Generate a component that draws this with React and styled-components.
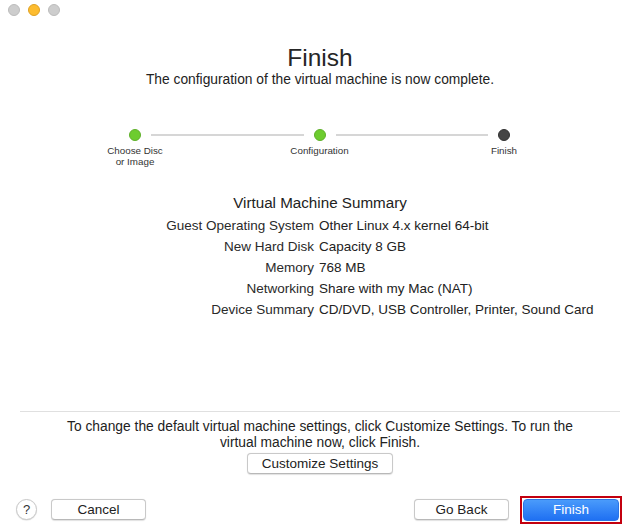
import React from "react";
import styled, { createGlobalStyle } from "styled-components";

const GlobalStyle = createGlobalStyle`
  html, body {
    margin: 0;
    padding: 0;
    background: #ffffff;
  }
  body {
    font-family: "Liberation Sans", Arial, sans-serif;
    color: #242424;
  }
`;

const steps = [
  { label: ["Choose Disc", "or Image"], done: true },
  { label: ["Configuration"], done: true },
  { label: ["Finish"], done: false },
];

const summary = [
  ["Guest Operating System", "Other Linux 4.x kernel 64-bit"],
  ["New Hard Disk", "Capacity 8 GB"],
  ["Memory", "768 MB"],
  ["Networking", "Share with my Mac (NAT)"],
  ["Device Summary", "CD/DVD, USB Controller, Printer, Sound Card"],
];

function App() {
  return (
    <>
      <GlobalStyle />
      <Window>
        <TitleBar>
          <Light />
          <Light $active />
          <Light />
        </TitleBar>

        <Title>Finish</Title>
        <Subtitle>The configuration of the virtual machine is now complete.</Subtitle>

        <Stepper>
          {steps.map((s, i) => (
            <React.Fragment key={i}>
              {i > 0 && <Connector />}
              <Step>
                <Dot $done={s.done} />
                <StepLabel>
                  {s.label.map((l) => (
                    <div key={l}>{l}</div>
                  ))}
                </StepLabel>
              </Step>
            </React.Fragment>
          ))}
        </Stepper>

        <SummaryHeading>Virtual Machine Summary</SummaryHeading>
        <SummaryGrid>
          {summary.map(([k, v]) => (
            <React.Fragment key={k}>
              <Key>{k}</Key>
              <Value>{v}</Value>
            </React.Fragment>
          ))}
        </SummaryGrid>

        <Spacer />

        <Separator />
        <Hint>
          To change the default virtual machine settings, click Customize Settings. To run the
          <br />
          virtual machine now, click Finish.
        </Hint>
        <CenterRow>
          <Button $wide>Customize Settings</Button>
        </CenterRow>

        <BottomBar>
          <HelpButton>?</HelpButton>
          <Button>Cancel</Button>
          <Grow />
          <Button>Go Back</Button>
          <Highlight>
            <PrimaryButton>Finish</PrimaryButton>
          </Highlight>
        </BottomBar>
      </Window>
    </>
  );
}

export default App;

const Window = styled.div`
  display: flex;
  flex-direction: column;
  width: 640px;
  height: 531px;
  background: #ffffff;
  overflow: hidden;
`;

const TitleBar = styled.div`
  display: flex;
  align-items: center;
  gap: 8px;
  height: 20px;
  padding-left: 8px;
`;

const Light = styled.span`
  width: 12px;
  height: 12px;
  border-radius: 50%;
  box-sizing: border-box;
  background: ${(p) => (p.$active ? "#fdbc2f" : "#cdcdcd")};
  border: 0.5px solid ${(p) => (p.$active ? "#dea123" : "#bcbcbc")};
`;

const Title = styled.h1`
  margin: 24px 0 0;
  font-size: 24.5px;
  line-height: 28px;
  font-weight: 400;
  text-align: center;
  color: #262626;
`;

const Subtitle = styled.p`
  margin: 0;
  font-size: 13.8px;
  line-height: 16px;
  text-align: center;
  color: #222;
`;

const Stepper = styled.div`
  display: flex;
  align-items: flex-start;
  width: 381px;
  margin: 41px 0 0 129px;
`;

const Step = styled.div`
  display: flex;
  flex-direction: column;
  align-items: center;
  width: 12px;
`;

const Dot = styled.span`
  width: 12px;
  height: 12px;
  border-radius: 50%;
  box-sizing: border-box;
  background: ${(p) => (p.$done ? "#6dcc2f" : "#454545")};
  border: 0.5px solid ${(p) => (p.$done ? "#5fb02a" : "#333")};
`;

const StepLabel = styled.div`
  margin-top: 4px;
  font-size: 9.8px;
  line-height: 11px;
  white-space: nowrap;
  text-align: center;
  color: #333;
`;

const Connector = styled.span`
  flex: 1;
  height: 2px;
  margin: 5px 10px 0;
  background: #d6d6d6;
`;

const SummaryHeading = styled.div`
  margin-top: 26px;
  font-size: 15.2px;
  line-height: 20px;
  text-align: center;
  color: #222;
`;

const SummaryGrid = styled.div`
  display: grid;
  grid-template-columns: 314px 1fr;
  column-gap: 5px;
  margin-top: 2px;
  font-size: 13.5px;
  line-height: 21px;
`;

const Key = styled.div`
  text-align: right;
  color: #2a2a2a;
`;

const Value = styled.div`
  color: #222;
`;

const Spacer = styled.div`
  flex: 1;
`;

const Separator = styled.div`
  height: 1px;
  margin: 0 20px;
  background: #e0e0e0;
`;

const Hint = styled.p`
  margin: 7px 0 0;
  font-size: 13.8px;
  line-height: 16px;
  text-align: center;
  color: #222;
`;

const CenterRow = styled.div`
  display: flex;
  justify-content: center;
  margin-top: 2px;
`;

const Button = styled.button`
  box-sizing: border-box;
  height: 21px;
  min-width: ${(p) => (p.$wide ? "145px" : "95px")};
  padding: 0 14px;
  border: 1px solid #c9c9c9;
  border-bottom-color: #b8b8b8;
  border-radius: 4px;
  background: #ffffff;
  box-shadow: 0 0.5px 1px rgba(0, 0, 0, 0.12);
  font-family: "Liberation Sans", Arial, sans-serif;
  font-size: 13.5px;
  color: #222;
`;

const BottomBar = styled.div`
  display: flex;
  align-items: center;
  gap: 14px;
  height: 27px;
  margin-top: 22px;
  padding: 0 18px 8px 16px;
`;

const Grow = styled.div`
  flex: 1;
`;

const HelpButton = styled.button`
  box-sizing: border-box;
  width: 21px;
  height: 21px;
  padding: 0;
  border-radius: 50%;
  border: 1px solid #c9c9c9;
  background: #fff;
  box-shadow: 0 0.5px 1px rgba(0, 0, 0, 0.15);
  font-family: "Liberation Sans", Arial, sans-serif;
  font-size: 13px;
  line-height: 19px;
  color: #333;
`;

const Highlight = styled.div`
  display: flex;
  margin-left: -3px;
  border: 2px solid #c3000f;
  padding: 1px;
`;

const PrimaryButton = styled.button`
  box-sizing: border-box;
  width: 96px;
  height: 22px;
  border: 1px solid #2a75e6;
  border-radius: 4px;
  background: linear-gradient(to bottom, #4a9bfb, #1f70f2);
  font-family: "Liberation Sans", Arial, sans-serif;
  font-size: 13.5px;
  color: #ffffff;
`;
